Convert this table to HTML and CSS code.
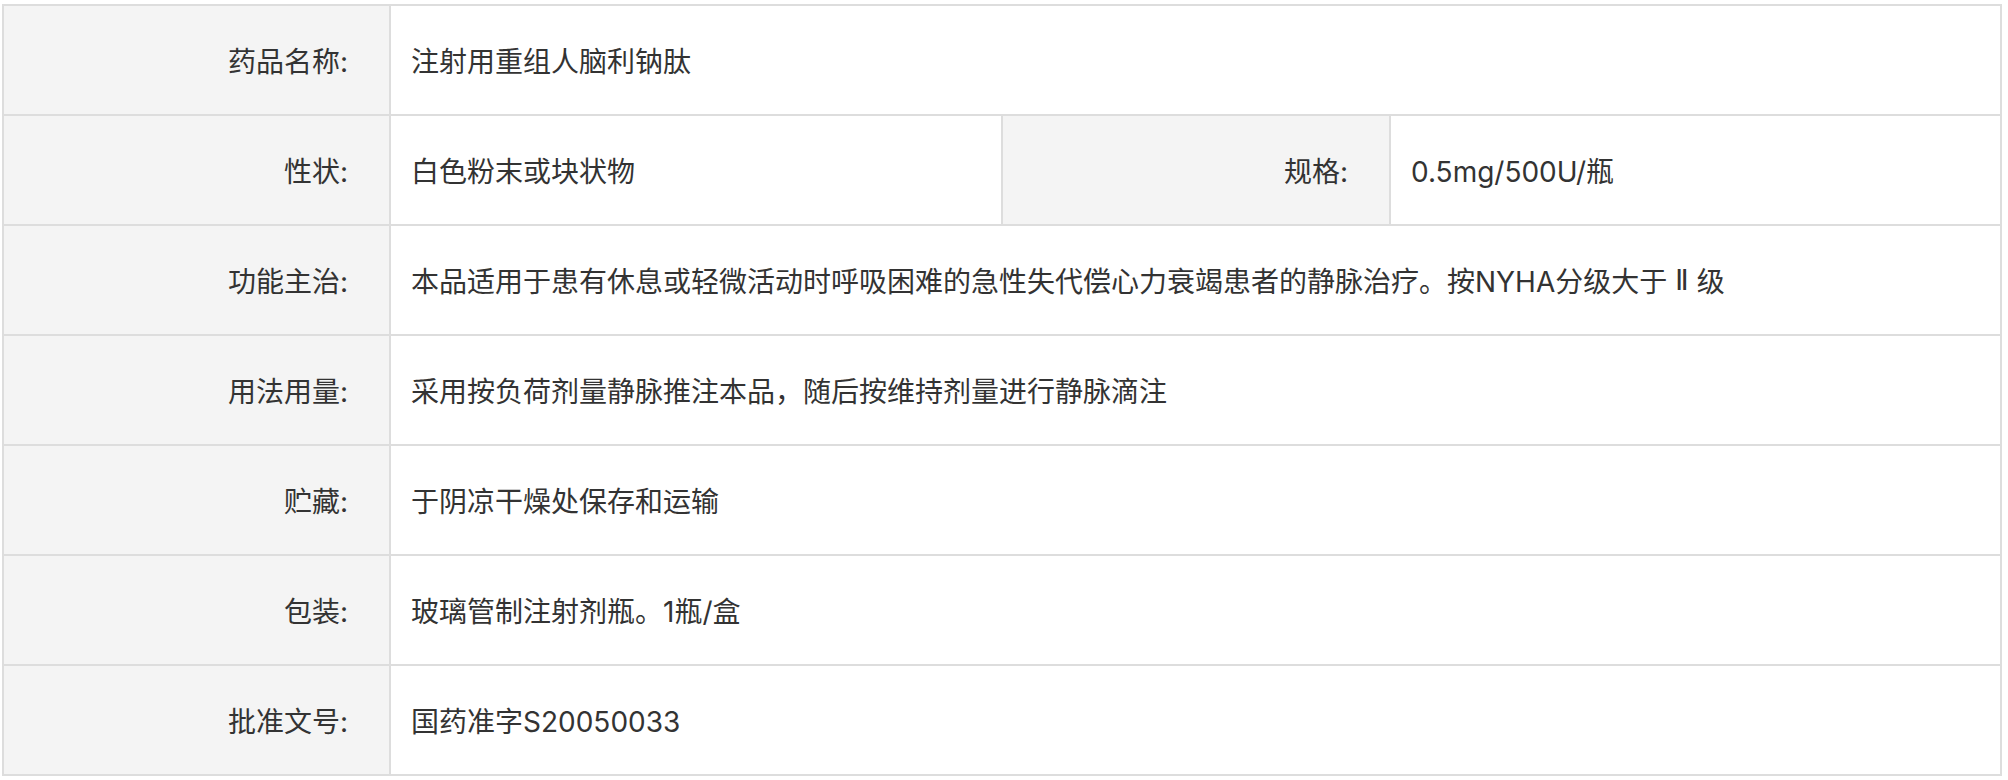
FILE: index.html
```html
<!DOCTYPE html>
<html lang="zh-CN">
<head>
<meta charset="utf-8">
<title>药品说明</title>
<link rel="stylesheet" href="styles.css">
</head>
<body>
<div class="sheet">
  <div class="label">药品名称:</div>
  <div class="value span3">注射用重组人脑利钠肽</div>

  <div class="label">性状:</div>
  <div class="value">白色粉末或块状物</div>
  <div class="label">规格:</div>
  <div class="value">0.5mg/500U/瓶</div>

  <div class="label">功能主治:</div>
  <div class="value span3">本品适用于患有休息或轻微活动时呼吸困难的急性失代偿心力衰竭患者的静脉治疗。按NYHA分级大于&nbsp;<span class="roman">Ⅱ</span>&nbsp;级</div>

  <div class="label">用法用量:</div>
  <div class="value span3">采用按负荷剂量静脉推注本品，随后按维持剂量进行静脉滴注</div>

  <div class="label">贮藏:</div>
  <div class="value span3">于阴凉干燥处保存和运输</div>

  <div class="label">包装:</div>
  <div class="value span3">玻璃管制注射剂瓶。1瓶/盒</div>

  <div class="label">批准文号:</div>
  <div class="value span3">国药准字S20050033</div>
</div>
</body>
</html>
```
FILE: styles.css
```css
html, body {
  margin: 0;
  padding: 0;
  background: #ffffff;
}
body {
  font-family: "Inter", "Noto Sans CJK SC", sans-serif;
  color: #333333;
  font-size: 28px;
}
.sheet {
  margin: 4px 0 0 2px;
  width: 2000px;
  box-sizing: border-box;
  padding: 2px;
  background: #dddddd;
  display: grid;
  grid-template-columns: 385fr 610fr 386fr 609fr;
  grid-auto-rows: 108px;
  gap: 2px;
}
.label {
  background: #f4f4f4;
  display: flex;
  align-items: center;
  justify-content: flex-end;
  padding-right: 41px;
  white-space: nowrap;
}
.value {
  background: #ffffff;
  display: flex;
  align-items: center;
  padding-left: 20px;
  white-space: pre;
}
.roman {
  font-family: "DejaVu Sans", "Noto Sans CJK SC", sans-serif;
  font-size: 28px;
}
.span3 {
  grid-column: span 3;
}
```
